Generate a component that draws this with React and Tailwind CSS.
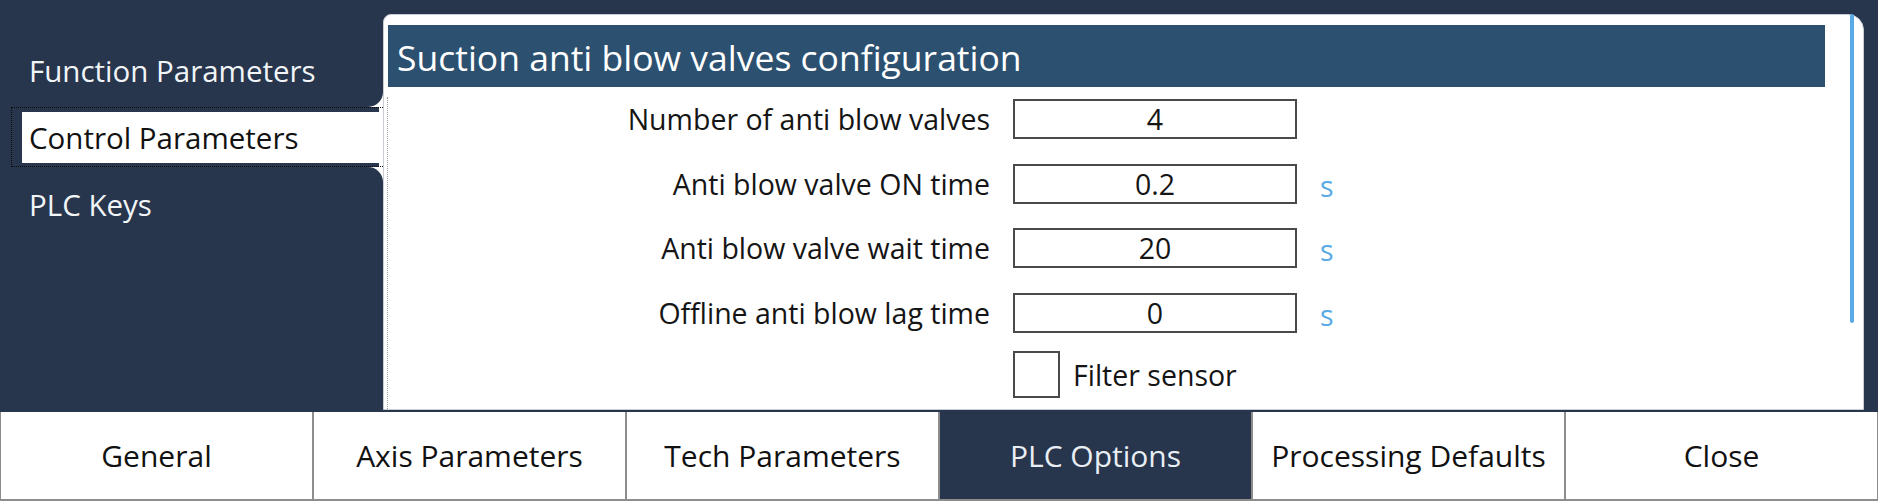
import React from 'react'

const FONT = { fontFamily: '"Open Sans", "Noto Sans", sans-serif' }

const rows = [
  { label: 'Number of anti blow valves', value: '4', unit: '' },
  { label: 'Anti blow valve ON time', value: '0.2', unit: 's' },
  { label: 'Anti blow valve wait time', value: '20', unit: 's' },
  { label: 'Offline anti blow lag time', value: '0', unit: 's' },
]

const tabs = ['General', 'Axis Parameters', 'Tech Parameters', 'PLC Options', 'Processing Defaults', 'Close']

function Sidebar() {
  return (
    <div className="w-[383px] shrink-0 flex flex-col bg-[linear-gradient(to_right,#27354d_360px,#ffffff_360px)] text-[29.5px]">
      <div className="h-[107px] bg-[#27354d] rounded-br-[15px] pt-[51px] pl-[29px] leading-[40px] text-[#f2f5f8] whitespace-nowrap">
        Function Parameters
      </div>
      <div className="h-[60px] bg-[linear-gradient(to_right,#27354d_379px,#ffffff_379px)] pl-[11px]">
        <div className="w-[372px] h-[60px] border border-dotted border-[#0b0b0b] border-r-0 pl-[10px] pt-[4px] pb-[3px]">
          <div className="h-[51px] bg-white leading-[51px] pl-[7px] text-[#111] whitespace-nowrap">Control Parameters</div>
        </div>
      </div>
      <div className="flex-1 bg-[#27354d] rounded-tr-[15px] pt-[18px] pl-[29px] leading-[40px] text-[#f2f5f8]">
        PLC Keys
      </div>
    </div>
  )
}

function FormRow({ label, value, unit }) {
  return (
    <>
      <div className="h-[40px] text-right leading-[40px] text-[#151515] whitespace-nowrap">{label}</div>
      <div className="h-[40px] border-2 border-[#4a4a4a] bg-white text-center leading-[36px] text-[#151515]">{value}</div>
      <div className="h-[40px] leading-[45px] text-[#5aaae6]">{unit}</div>
    </>
  )
}

export default function App() {
  return (
    <div className="w-[1878px] h-[501px] bg-[#27354d] flex flex-col overflow-hidden" style={FONT}>
      <div className="h-[412px] flex">
        <Sidebar />
        <div className="flex-1 pt-[14px] pb-[2px] pr-[14px]">
          <div className="h-full bg-white border border-[#c9cdd3] rounded-tl-[8px] rounded-tr-[16px] flex">
            <div className="flex-1 flex flex-col">
              <div className="mt-[10px] ml-[4px] mr-[25px] h-[62px] bg-[#2c5070] pl-[9px] pt-[3px] text-[35.5px] leading-[59px] text-white whitespace-nowrap">
                Suction anti blow valves configuration
              </div>
              <div className="flex-1 ml-[3px] mt-[10px] border-l border-dotted border-[#9a9a9a]">
                <div className="grid grid-cols-[602px_284px_auto] gap-x-[23px] gap-y-[24.5px] items-start text-[28.5px] pt-[2px]">
                  {rows.map(r => (
                    <FormRow key={r.label} {...r} />
                  ))}
                  <div />
                  <div className="-mt-[6px] flex items-center gap-[13px]">
                    <div className="w-[47px] h-[47px] border-2 border-[#4a4a4a] bg-white shrink-0" />
                    <span className="text-[#151515] whitespace-nowrap leading-[40px]">Filter sensor</span>
                  </div>
                  <div />
                </div>
              </div>
            </div>
            <div className="w-[4px] h-[309px] -mt-px rounded-full bg-[#5aaae8] mr-[9px]" />
          </div>
        </div>
      </div>
      <div className="flex-1 grid grid-cols-6">
        {tabs.map(t => (
          <div
            key={t}
            className={
              t === 'PLC Options'
                ? 'flex items-center justify-center bg-[#27354d] text-[#e9eef4] border-x border-b-2 border-[#8d8d8d] text-[30px] whitespace-nowrap'
                : 'flex items-center justify-center bg-white text-[#111] border-x border-b-2 border-[#8d8d8d] text-[30px] whitespace-nowrap'
            }
          >
            {t}
          </div>
        ))}
      </div>
    </div>
  )
}
